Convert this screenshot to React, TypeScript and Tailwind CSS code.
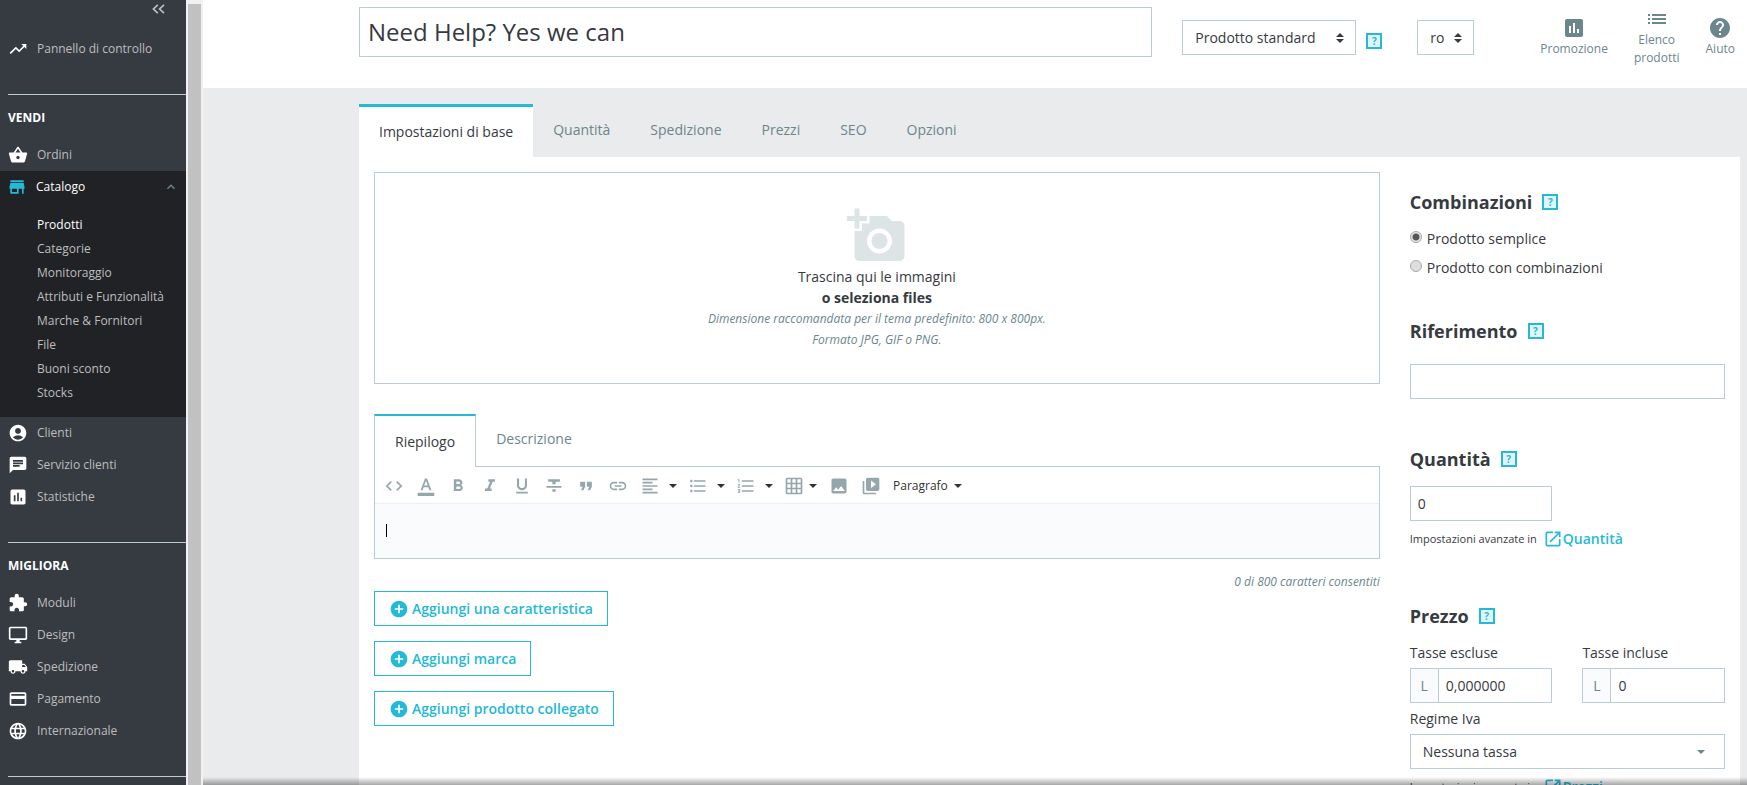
import React from 'react';
import type { IconType } from 'react-icons';
import {
  MdAccountCircle,
  MdAddAPhoto,
  MdAddCircle,
  MdAssessment,
  MdChat,
  MdCode,
  MdExtension,
  MdFormatAlignLeft,
  MdFormatBold,
  MdFormatColorText,
  MdFormatItalic,
  MdFormatListBulleted,
  MdFormatListNumbered,
  MdFormatQuote,
  MdFormatStrikethrough,
  MdFormatUnderlined,
  MdGridOn,
  MdHelp,
  MdInsertLink,
  MdKeyboardArrowUp,
  MdLanguage,
  MdList,
  MdLocalShipping,
  MdOpenInNew,
  MdOutlineDesktopWindows,
  MdPayment,
  MdPhoto,
  MdShoppingBasket,
  MdStore,
  MdTrendingUp,
  MdVideoLibrary,
} from 'react-icons/md';

type MenuEntry = { icon: IconType; label: string };

const catalogItems = [
  'Prodotti',
  'Categorie',
  'Monitoraggio',
  'Attributi e Funzionalità',
  'Marche & Fornitori',
  'File',
  'Buoni sconto',
  'Stocks',
];

const sellItems: MenuEntry[] = [
  { icon: MdAccountCircle, label: 'Clienti' },
  { icon: MdChat, label: 'Servizio clienti' },
  { icon: MdAssessment, label: 'Statistiche' },
];

const improveItems: MenuEntry[] = [
  { icon: MdExtension, label: 'Moduli' },
  { icon: MdOutlineDesktopWindows, label: 'Design' },
  { icon: MdLocalShipping, label: 'Spedizione' },
  { icon: MdPayment, label: 'Pagamento' },
  { icon: MdLanguage, label: 'Internazionale' },
];

const tabs = ['Impostazioni di base', 'Quantità', 'Spedizione', 'Prezzi', 'SEO', 'Opzioni'];

const simpleTool = 'flex items-center justify-center w-8';
const menuTool = 'flex items-center w-12 pl-[6px] gap-[9px]';
const tableTool = 'flex items-center w-[45px] pl-[6px] gap-[5px]';

const tools: { icon: IconType; label: string; style: string }[] = [
  { icon: MdCode, label: 'Codice sorgente', style: simpleTool },
  { icon: MdFormatColorText, label: 'Colore testo', style: simpleTool },
  { icon: MdFormatBold, label: 'Grassetto', style: simpleTool },
  { icon: MdFormatItalic, label: 'Corsivo', style: simpleTool },
  { icon: MdFormatUnderlined, label: 'Sottolineato', style: simpleTool },
  { icon: MdFormatStrikethrough, label: 'Barrato', style: simpleTool },
  { icon: MdFormatQuote, label: 'Citazione', style: simpleTool },
  { icon: MdInsertLink, label: 'Link', style: simpleTool },
  { icon: MdFormatAlignLeft, label: 'Allinea', style: menuTool },
  { icon: MdFormatListBulleted, label: 'Elenco puntato', style: menuTool },
  { icon: MdFormatListNumbered, label: 'Elenco numerato', style: menuTool },
  { icon: MdGridOn, label: 'Tabella', style: tableTool },
  { icon: MdPhoto, label: 'Immagine', style: simpleTool },
  { icon: MdVideoLibrary, label: 'Video', style: simpleTool },
];

function Caret({ className = '' }: { className?: string }) {
  return (
    <svg viewBox="0 0 8 4" className={`w-2 h-1 fill-current ${className}`}>
      <path d="M0 0h8L4 4z" />
    </svg>
  );
}

function HelpBadge() {
  return (
    <button
      type="button"
      aria-label="Aiuto"
      className="w-4 h-4 shrink-0 flex items-center justify-center border-2 border-[#25b9d7] bg-[#dff5f9] text-[#25b9d7] text-[10px] leading-none font-bold"
    >
      ?
    </button>
  );
}

function MenuLink({ icon: Icon, label }: MenuEntry) {
  return (
    <a href="#" className="flex items-center h-8 pl-2 text-[#bebebe]">
      <Icon className="w-5 h-5 text-white" />
      <span className="ml-[9px]">{label}</span>
    </a>
  );
}

function SectionTitle({ children }: { children: React.ReactNode }) {
  return (
    <div className="flex items-center gap-[10px] h-6">
      <h2 className="text-lg leading-6 font-bold">{children}</h2>
      <HelpBadge />
    </div>
  );
}

function AdvancedLink({ label }: { label: string }) {
  return (
    <p className="flex items-center h-5 mt-2 text-[11px]">
      Impostazioni avanzate in
      <a href="#" className="flex items-center ml-[6px] text-sm font-semibold text-[#25b9d7]">
        <MdOpenInNew className="w-5 h-5" />
        {label}
      </a>
    </p>
  );
}

function SelectBox({ label, value, className }: { label: string; value: string; className: string }) {
  return (
    <div className={`relative ${className}`}>
      <select
        aria-label={label}
        className="w-full h-[35px] pl-3 pr-6 appearance-none border border-[#bbcdd2] bg-white text-sm"
      >
        <option>{value}</option>
      </select>
      <svg viewBox="0 0 8 10" className="absolute right-3 top-[13px] w-2 h-[10px] fill-[#363a41] pointer-events-none">
        <path d="M4 0l4 4H0zM4 10L0 6h8z" />
      </svg>
    </div>
  );
}

function PriceField({ id, label, value }: { id: string; label: string; value: string }) {
  return (
    <div>
      <label htmlFor={id} className="block leading-5 mb-[5px]">
        {label}
      </label>
      <div className="flex h-[35px] border border-[#bbcdd2]">
        <span className="w-7 shrink-0 flex items-center justify-center bg-[#fafbfc] border-r border-[#bbcdd2] text-[#6c868e]">
          L
        </span>
        <input id={id} defaultValue={value} className="min-w-0 flex-1 px-[7px]" />
      </div>
    </div>
  );
}

function Sidebar() {
  return (
    <nav className="w-[186px] shrink-0 bg-[#363a41] text-xs">
      <div className="flex justify-end h-[33px] pr-[21px]">
        <button type="button" aria-label="Comprimi menu" className="w-[13px] h-[17px]">
          <svg viewBox="0 0 13 10" className="w-[13px] h-[10px] fill-none stroke-[#bebebe] stroke-[1.7]">
            <path d="M5.8.8L1.4 5l4.4 4.2M12 .8L7.6 5 12 9.2" />
          </svg>
        </button>
      </div>
      <MenuLink icon={MdTrendingUp} label="Pannello di controllo" />

      <div className="ml-2 mt-[29px] border-t border-[#bbcdd2]" />
      <h2 className="ml-2 mt-[15px] mb-[13px] leading-4 font-bold text-white">VENDI</h2>
      <MenuLink icon={MdShoppingBasket} label="Ordini" />
      <div className="h-[246px] bg-[#202226]">
        <a href="#" className="flex items-center h-8 pl-[7px] pr-[7px] text-white">
          <MdStore className="w-5 h-5 text-[#25b9d7]" />
          <span className="ml-[9px] flex-1 font-medium">Catalogo</span>
          <MdKeyboardArrowUp className="w-4 h-4 text-[#6c868e]" />
        </a>
        <ul className="mt-[10px]">
          {catalogItems.map((item) => (
            <li key={item} className="h-6 pl-[37px]">
              <a href="#" className={item === 'Prodotti' ? 'leading-6 text-white' : 'leading-6 text-[#bebebe]'}>
                {item}
              </a>
            </li>
          ))}
        </ul>
      </div>
      {sellItems.map((item) => (
        <MenuLink key={item.label} {...item} />
      ))}

      <div className="ml-2 mt-[29px] border-t border-[#bbcdd2]" />
      <h2 className="ml-2 mt-[15px] mb-[13px] leading-4 font-bold text-white">MIGLIORA</h2>
      {improveItems.map((item) => (
        <MenuLink key={item.label} {...item} />
      ))}
      <div className="ml-2 mt-[29px] border-t border-[#bbcdd2]" />
    </nav>
  );
}

function Header() {
  return (
    <header className="flex items-start h-[88px] bg-white pl-[156px] pr-3">
      <input
        aria-label="Nome prodotto"
        defaultValue="Need Help? Yes we can"
        className="mt-[7px] h-[50px] min-w-0 flex-1 px-2 pb-[2px] border border-[#bbcdd2] text-2xl"
      />
      <SelectBox label="Tipo di prodotto" value="Prodotto standard" className="ml-[30px] mt-5 w-[174px]" />
      <div className="ml-[10px] mt-[33px]">
        <HelpBadge />
      </div>
      <SelectBox label="Lingua" value="ro" className="ml-[35px] mt-5 w-[57px]" />
      <div className="flex items-center gap-[26px] ml-[66px] mt-[7px] h-[60px] text-xs leading-[18px] text-[#6c868e]">
        <a href="#" className="flex flex-col items-center">
          <MdAssessment className="w-6 h-6" />
          Promozione
        </a>
        <a href="#" className="flex flex-col items-center text-center">
          <MdList className="w-6 h-6" />
          Elenco
          <br />
          prodotti
        </a>
        <a href="#" className="flex flex-col items-center">
          <MdHelp className="w-6 h-6" />
          Aiuto
        </a>
      </div>
    </header>
  );
}

function Editor() {
  return (
    <section className="mt-[30px]">
      <div className="flex h-[53px]">
        <button
          type="button"
          className="px-5 border-x border-t-2 border-x-[#bbcdd2] border-t-[#25b9d7]"
        >
          Riepilogo
        </button>
        <div className="flex-1 border-b border-[#bbcdd2]">
          <button type="button" className="h-full px-5 pb-[2px] text-[#6c868e]">
            Descrizione
          </button>
        </div>
      </div>
      <div className="border border-t-0 border-[#bbcdd2]">
        <div className="flex h-9 pt-[2px] pl-[3px] text-[#95a6ac]">
          {tools.map(({ icon: Icon, label, style }) => (
            <button key={label} type="button" aria-label={label} className={style}>
              <Icon className="w-5 h-5" />
              {style !== simpleTool && <Caret className="text-[#333333]" />}
            </button>
          ))}
          <button type="button" className="flex items-center gap-[6px] px-[6px] text-xs text-[#333333]">
            Paragrafo
            <Caret />
          </button>
        </div>
        <div className="h-[55px] pt-5 pl-[11px] border-t border-[#eceff1] bg-[#fafbfd]">
          <div role="textbox" aria-label="Riepilogo" contentEditable className="h-[13px] border-l border-black outline-none" />
        </div>
      </div>
      <p className="mt-[13px] h-[19px] leading-5 text-right text-xs italic text-[#6c868e]">
        0 di 800 caratteri consentiti
      </p>
    </section>
  );
}

export default function App() {
  return (
    <div className="flex h-screen overflow-hidden font-['Open_Sans',sans-serif] text-sm text-[#363a41]">
      <Sidebar />
      <div className="w-[17px] shrink-0 px-[2px] pt-1 bg-[#f1f1f1]">
        <div className="h-full bg-[#c1c1c1]" />
      </div>

      <div className="relative flex flex-col flex-1 min-w-0 bg-[#eaebec]">
        <Header />
        <main className="flex flex-col flex-1 min-h-0 pl-[156px] pr-[7px] pt-4">
          <div className="flex h-[53px] shrink-0">
            {tabs.map((tab, i) => (
              <button
                key={tab}
                type="button"
                className={i === 0 ? 'px-5 bg-white border-t-[3px] border-[#25b9d7]' : 'px-5 pb-[2px] text-[#6c868e]'}
              >
                {tab}
              </button>
            ))}
          </div>

          <div className="flex flex-1 bg-white pt-[15px]">
            <div className="w-3/4 px-[15px]">
              <div className="flex flex-col items-center h-[212px] pt-[33px] border border-[#bbcdd2] text-center leading-[21px]">
                <MdAddAPhoto className="w-[60px] h-[60px] text-[#dde4e6]" />
                <p>Trascina qui le immagini</p>
                <button type="button" className="font-bold">
                  o seleziona files
                </button>
                <p className="text-xs leading-[21px] italic text-[#6c868e]">
                  Dimensione raccomandata per il tema predefinito: 800 x 800px.
                  <br />
                  Formato JPG, GIF o PNG.
                </p>
              </div>

              <Editor />

              <div className="flex flex-col items-start gap-[15px]">
                {['Aggiungi una caratteristica', 'Aggiungi marca', 'Aggiungi prodotto collegato'].map((label) => (
                  <button
                    key={label}
                    type="button"
                    className="flex items-center gap-[3px] h-[35px] px-[14px] border border-[#25b9d7] font-semibold text-[#25b9d7]"
                  >
                    <MdAddCircle className="w-5 h-5" />
                    {label}
                  </button>
                ))}
              </div>
            </div>

            <aside className="w-1/4 px-[15px] pt-[18px]">
              <SectionTitle>Combinazioni</SectionTitle>
              <div className="mt-[15px] flex flex-col gap-[9px]">
                {['Prodotto semplice', 'Prodotto con combinazioni'].map((label, i) => (
                  <label key={label} className="flex gap-[5px] h-5 leading-5">
                    <input
                      type="radio"
                      name="combinations"
                      defaultChecked={i === 0}
                      className="appearance-none mt-[2px] w-3 h-3 rounded-full border border-[#a8a8a8] bg-[#dedede] checked:bg-[radial-gradient(circle,#555_0_3px,#e6e6e6_4px)]"
                    />
                    {label}
                  </label>
                ))}
              </div>

              <div className="mt-[41px]">
                <SectionTitle>Riferimento</SectionTitle>
                <input aria-label="Riferimento" className="mt-[21px] w-full h-[35px] px-[7px] border border-[#bbcdd2]" />
              </div>

              <div className="mt-12">
                <SectionTitle>Quantità</SectionTitle>
                <div className="grid grid-cols-2 gap-[30px] mt-[15px]">
                  <input aria-label="Quantità" defaultValue="0" className="min-w-0 h-[35px] px-[7px] border border-[#bbcdd2]" />
                </div>
                <AdvancedLink label="Quantità" />
              </div>

              <div className="mt-[55px]">
                <SectionTitle>Prezzo</SectionTitle>
                <div className="grid grid-cols-2 gap-[30px] mt-[15px]">
                  <PriceField id="tax-excluded" label="Tasse escluse" value="0,000000" />
                  <PriceField id="tax-included" label="Tasse incluse" value="0" />
                </div>
                <label htmlFor="tax-rule" className="block mt-[6px] mb-[5px] leading-5">
                  Regime Iva
                </label>
                <div className="relative">
                  <select
                    id="tax-rule"
                    className="w-full h-[35px] px-3 appearance-none border border-[#bbcdd2] bg-white"
                  >
                    <option>Nessuna tassa</option>
                  </select>
                  <Caret className="absolute right-5 top-4 text-[#6c868e] pointer-events-none" />
                </div>
                <AdvancedLink label="Prezzi" />
              </div>
            </aside>
          </div>
        </main>
        <div className="absolute inset-x-0 bottom-0 h-2 bg-gradient-to-t from-black/35 to-transparent pointer-events-none" />
      </div>
    </div>
  );
}
